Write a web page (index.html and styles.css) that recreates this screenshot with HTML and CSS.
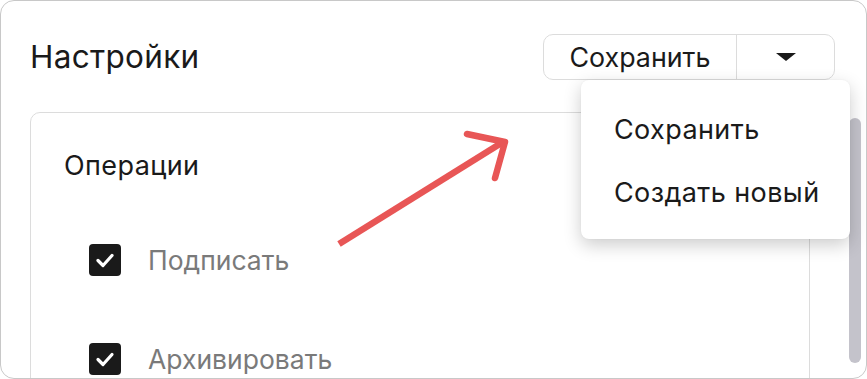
FILE: index.html
```html
<!DOCTYPE html>
<html lang="ru">
<head>
<meta charset="utf-8">
<link rel="stylesheet" href="styles.css">
</head>
<body>
<div class="panel">
  <div class="header">
    <h1 class="title">Настройки</h1>
    <div class="split-btn">
      <span class="btn-main">Сохранить</span>
      <span class="btn-toggle"><span class="caret"></span></span>
    </div>
  </div>
  <div class="body-row">
    <div class="inner-card">
      <div class="section-title">Операции</div>
      <label class="check-row">
        <span class="checkbox"><svg width="32" height="32" viewBox="0 0 32 32"><path d="M9 16.5 L14 21.5 L23 11.5" fill="none" stroke="#fff" stroke-width="3.2" stroke-linecap="round" stroke-linejoin="round"/></svg></span>
        <span class="check-label">Подписать</span>
      </label>
      <label class="check-row">
        <span class="checkbox"><svg width="32" height="32" viewBox="0 0 32 32"><path d="M9 16.5 L14 21.5 L23 11.5" fill="none" stroke="#fff" stroke-width="3.2" stroke-linecap="round" stroke-linejoin="round"/></svg></span>
        <span class="check-label">Архивировать</span>
      </label>
    </div>
    <div class="scrollbar"></div>
  </div>
  <div class="menu">
    <div class="menu-item">Сохранить</div>
    <div class="menu-item">Создать новый</div>
  </div>
  <svg class="arrow" width="867" height="379" viewBox="0 0 867 379">
    <g fill="none" stroke="#e85656" stroke-width="6.5" stroke-linecap="round" stroke-linejoin="round">
      <path d="M339 244 L503 142" stroke-linecap="butt"/>
      <path d="M467 134 L505 142 L495 178"/>
    </g>
  </svg>
</div>
</body>
</html>
```

FILE: styles.css
```css
* { box-sizing: border-box; }
html, body { margin: 0; padding: 0; background: #fff; }
body {
  font-family: Inter, "Noto Sans", sans-serif;
  color: #1a1a1a;
}
.panel {
  position: relative;
  width: 867px;
  height: 379px;
  border: 1px solid #c8c8c8;
  border-radius: 14px;
  overflow: hidden;
  padding: 32px 31px 0 29px;
}
.header {
  display: flex;
  justify-content: space-between;
  align-items: center;
  height: 47px;
}
.title {
  margin: 0;
  font-weight: 400;
  font-size: 31.5px;
  letter-spacing: 0.3px;
  line-height: 1;
  color: #1a1a1a;
}
.split-btn {
  display: flex;
  height: 46px;
  border: 1px solid #dcdcdc;
  border-radius: 10px;
  overflow: hidden;
}
.btn-main {
  display: flex;
  align-items: center;
  justify-content: center;
  width: 193px;
  font-size: 26.8px;
  color: #1a1a1a;
  border-right: 1px solid #dcdcdc;
}
.btn-toggle {
  display: flex;
  align-items: center;
  justify-content: center;
  width: 97px;
}
.caret {
  width: 0;
  height: 0;
  border-left: 10px solid transparent;
  border-right: 10px solid transparent;
  border-top: 8px solid #1a1a1a;
}
.body-row {
  display: flex;
  margin-top: 32px;
}
.inner-card {
  width: 780px;
  height: 300px;
  flex: none;
  border: 1px solid #dcdcdc;
  border-radius: 10px;
  padding: 38px 0 0 33px;
}
.section-title {
  font-size: 27px;
  letter-spacing: 0.4px;
  line-height: 30px;
  color: #1a1a1a;
}
.check-row {
  display: flex;
  align-items: center;
  gap: 27px;
  margin-left: 25px;
}
.section-title + .check-row { margin-top: 63px; }
.check-row + .check-row { margin-top: 67px; }
.checkbox {
  width: 32px;
  height: 32px;
  border-radius: 4px;
  background: #1a1a1a;
  display: block;
  flex: none;
}
.checkbox svg { display: block; }
.check-label {
  font-size: 26.5px;
  line-height: 30px;
  color: #7a7a7a;
}
.scrollbar {
  width: 12px;
  height: 245px;
  margin-left: 39px;
  margin-top: 6px;
  border-radius: 6px;
  background: #c4c3cb;
  flex: none;
}
.menu {
  position: absolute;
  left: 580px;
  top: 79px;
  width: 269px;
  height: 159px;
  background: #fff;
  border-radius: 8px;
  box-shadow: 0 6px 18px rgba(0,0,0,0.2), 0 0 2px rgba(0,0,0,0.06);
  padding: 35px 0 0 33px;
}
.menu-item {
  font-size: 27px;
  line-height: 30px;
  color: #1a1a1a;
  letter-spacing: 0.4px;
}
.menu-item + .menu-item { margin-top: 33px; }
.arrow {
  position: absolute;
  left: -1px;
  top: -1px;
  pointer-events: none;
}
```
